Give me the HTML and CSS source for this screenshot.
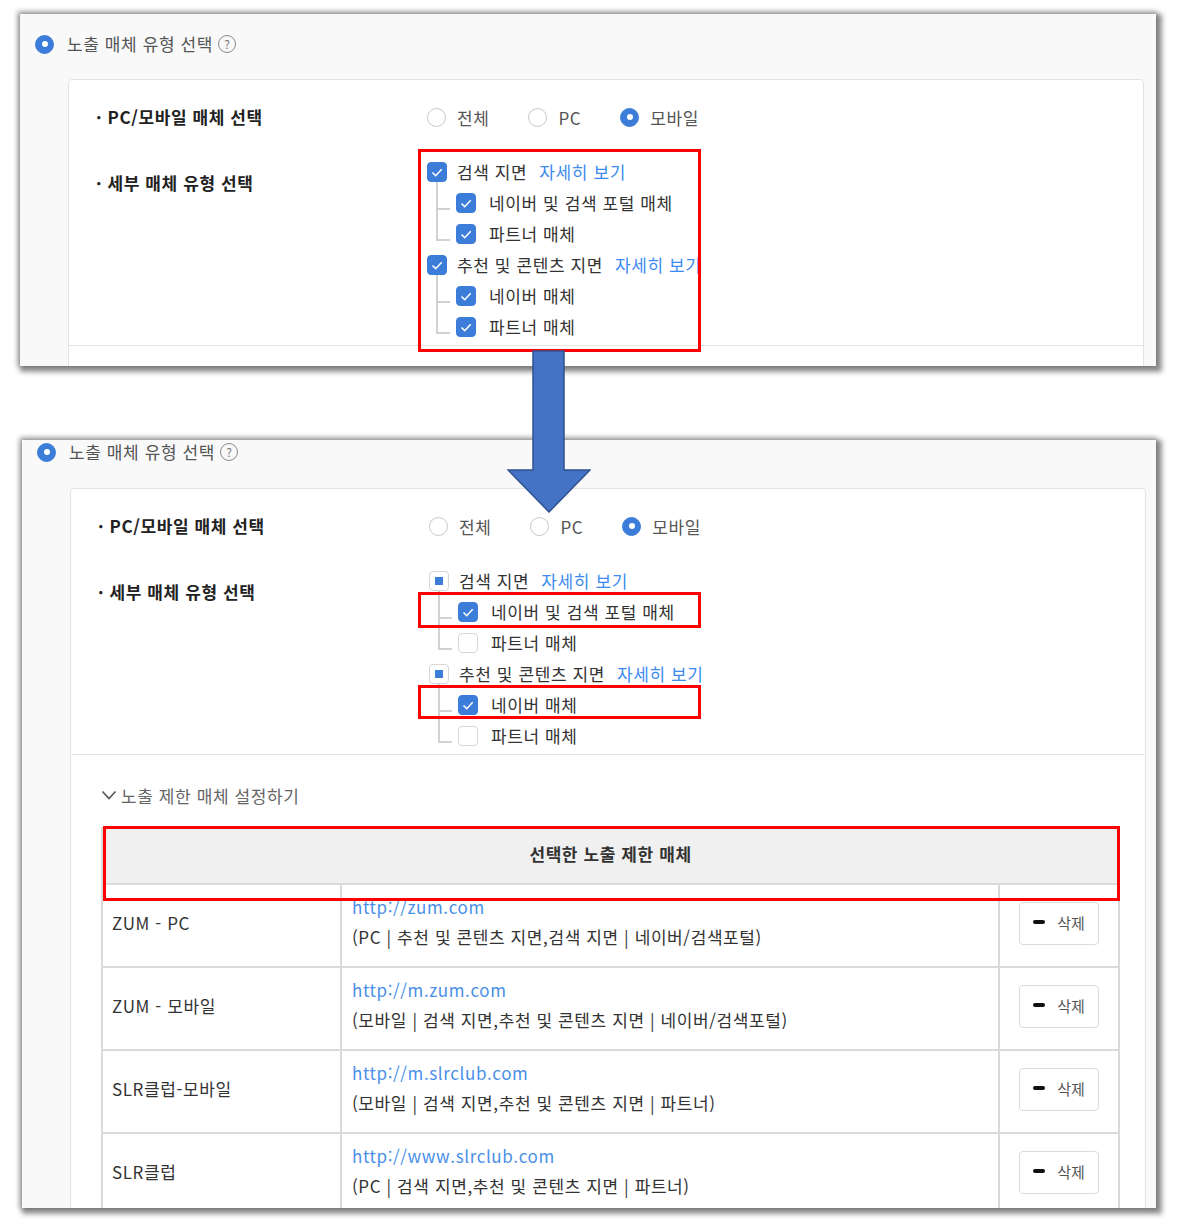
FILE: index.html
```html
<!DOCTYPE html>
<html lang="ko">
<head>
    <meta charset="UTF-8">
    <meta name="viewport" content="width=device-width, initial-scale=1.0">
    <title>노출 매체 유형 선택</title>
    <link rel="stylesheet" href="styles.css">
</head>
<body>
    <div class="canvas">
        <!-- Before: all media types checked -->
        <section class="shot shot-before">
            <div class="section-title">
                <span class="radio on"></span>
                <span>노출 매체 유형 선택</span>
                <span class="help">?</span>
            </div>
            <div class="media-box">
                <div class="media-form">
                    <div class="form-row">
                        <div class="form-label">· PC/모바일 매체 선택</div>
                        <div class="radio-group">
                            <label class="opt"><span class="radio"></span>전체</label>
                            <label class="opt"><span class="radio"></span>PC</label>
                            <label class="opt"><span class="radio on"></span>모바일</label>
                        </div>
                    </div>
                    <div class="form-row">
                        <div class="form-label detail">· 세부 매체 유형 선택</div>
                        <div class="tree clip">
                            <div class="tree-row"><span class="check on"><svg viewBox="0 0 20 20"><path d="M5.5 10.5l3.2 3.2 6-6.4"/></svg></span>검색 지면<a class="more" href="#">자세히 보기</a></div>
                            <div class="tree-row child"><span class="check on"><svg viewBox="0 0 20 20"><path d="M5.5 10.5l3.2 3.2 6-6.4"/></svg></span>네이버 및 검색 포털 매체</div>
                            <div class="tree-row child"><span class="check on"><svg viewBox="0 0 20 20"><path d="M5.5 10.5l3.2 3.2 6-6.4"/></svg></span>파트너 매체</div>
                            <div class="tree-row"><span class="check on"><svg viewBox="0 0 20 20"><path d="M5.5 10.5l3.2 3.2 6-6.4"/></svg></span>추천 및 콘텐츠 지면<a class="more" href="#">자세히 보기</a></div>
                            <div class="tree-row child"><span class="check on"><svg viewBox="0 0 20 20"><path d="M5.5 10.5l3.2 3.2 6-6.4"/></svg></span>네이버 매체</div>
                            <div class="tree-row child"><span class="check on"><svg viewBox="0 0 20 20"><path d="M5.5 10.5l3.2 3.2 6-6.4"/></svg></span>파트너 매체</div>
                        </div>
                    </div>
                </div>
                <div class="media-extra"></div>
            </div>
        </section>

        <!-- After: only naver media checked, excluded list shown -->
        <section class="shot shot-after">
            <div class="section-title">
                <span class="radio on"></span>
                <span>노출 매체 유형 선택</span>
                <span class="help">?</span>
            </div>
            <div class="media-box">
                <div class="media-form">
                    <div class="form-row">
                        <div class="form-label">· PC/모바일 매체 선택</div>
                        <div class="radio-group">
                            <label class="opt"><span class="radio"></span>전체</label>
                            <label class="opt"><span class="radio"></span>PC</label>
                            <label class="opt"><span class="radio on"></span>모바일</label>
                        </div>
                    </div>
                    <div class="form-row">
                        <div class="form-label detail">· 세부 매체 유형 선택</div>
                        <div class="tree">
                            <div class="tree-row"><span class="check part"></span>검색 지면<a class="more" href="#">자세히 보기</a></div>
                            <div class="tree-row child"><span class="check on"><svg viewBox="0 0 20 20"><path d="M5.5 10.5l3.2 3.2 6-6.4"/></svg></span>네이버 및 검색 포털 매체</div>
                            <div class="tree-row child"><span class="check"></span>파트너 매체</div>
                            <div class="tree-row"><span class="check part"></span>추천 및 콘텐츠 지면<a class="more" href="#">자세히 보기</a></div>
                            <div class="tree-row child"><span class="check on"><svg viewBox="0 0 20 20"><path d="M5.5 10.5l3.2 3.2 6-6.4"/></svg></span>네이버 매체</div>
                            <div class="tree-row child"><span class="check"></span>파트너 매체</div>
                        </div>
                    </div>
                </div>
                <div class="media-extra">
                    <div class="toggle">
                        <svg class="chevron" viewBox="0 0 16 10"><path d="M1.5 1.5l6.5 7 6.5-7"/></svg>
                        노출 제한 매체 설정하기
                    </div>
                    <table class="block-table">
                        <colgroup>
                            <col class="col-name">
                            <col class="col-site">
                            <col class="col-act">
                        </colgroup>
                        <thead>
                            <tr><th colspan="3">선택한 노출 제한 매체</th></tr>
                        </thead>
                        <tbody>
                            <tr>
                                <td>ZUM - PC</td>
                                <td class="site"><a href="#">http://zum.com</a><div>(PC | 추천 및 콘텐츠 지면,검색 지면 | 네이버/검색포털)</div></td>
                                <td class="act"><button class="del-btn"><span class="minus"></span>삭제</button></td>
                            </tr>
                            <tr>
                                <td>ZUM - 모바일</td>
                                <td class="site"><a href="#">http://m.zum.com</a><div>(모바일 | 검색 지면,추천 및 콘텐츠 지면 | 네이버/검색포털)</div></td>
                                <td class="act"><button class="del-btn"><span class="minus"></span>삭제</button></td>
                            </tr>
                            <tr>
                                <td>SLR클럽-모바일</td>
                                <td class="site"><a href="#">http://m.slrclub.com</a><div>(모바일 | 검색 지면,추천 및 콘텐츠 지면 | 파트너)</div></td>
                                <td class="act"><button class="del-btn"><span class="minus"></span>삭제</button></td>
                            </tr>
                            <tr>
                                <td>SLR클럽</td>
                                <td class="site"><a href="#">http://www.slrclub.com</a><div>(PC | 검색 지면,추천 및 콘텐츠 지면 | 파트너)</div></td>
                                <td class="act"><button class="del-btn"><span class="minus"></span>삭제</button></td>
                            </tr>
                        </tbody>
                    </table>
                </div>
            </div>
        </section>

        <!-- annotations drawn over the screenshots -->
        <div class="mark mark-tree"></div>
        <div class="mark mark-portal"></div>
        <div class="mark mark-naver"></div>
        <div class="mark mark-table"></div>
        <svg class="flow-arrow" viewBox="0 0 84 163">
            <polygon points="26,1 57,1 57,120 83,120 42,162 1,120 26,120"/>
        </svg>
    </div>
</body>
</html>
```

FILE: styles.css
```css
* {
    box-sizing: border-box;
}
body {
    margin: 0;
    background-color: #fff;
    font-family: "Noto Sans CJK KR", "Noto Sans", sans-serif;
    font-size: 17px;
    letter-spacing: 0.6px;
    color: #333;
}
.canvas {
    position: relative;
    width: 1178px;
    height: 1226px;
    padding: 14px 0 0 20px;
    display: flex;
    flex-direction: column;
    gap: 74px;
    overflow: hidden;
}

/* screenshot panels */
.shot {
    flex-shrink: 0;
    width: 1136px;
    background-color: #f9f9f9;
    overflow: hidden;
    box-shadow: 3px 3px 5px 3px rgba(0, 0, 0, 0.42), -1px -1px 5px 2px rgba(0, 0, 0, 0.25);
}
.shot-before {
    height: 352px;
    padding-top: 18px;
}
.shot-after {
    height: 768px;
    width: 1134px;
    margin-left: 2px;
}
.section-title {
    display: flex;
    align-items: center;
    height: 24px;
    padding-left: 15px;
    color: #555;
    line-height: 24px;
}
.section-title .radio {
    margin-right: 13px;
}
.help {
    width: 18px;
    height: 18px;
    margin-left: 5px;
    border: 1px solid #8a8a8a;
    border-radius: 50%;
    font-size: 12px;
    letter-spacing: 0;
    line-height: 16px;
    text-align: center;
    color: #777;
}
.media-box {
    margin: 23px 12px 0 48px;
    background-color: #fff;
    border: 1px solid #e3e3e3;
    border-radius: 4px;
}
.shot-after .media-box {
    margin-top: 24px;
    margin-right: 10px;
}
.media-form {
    display: flex;
    flex-direction: column;
    gap: 27px;
    padding: 25px 0 3px 27px;
}
.form-row {
    display: flex;
}
.form-label {
    flex-shrink: 0;
    width: 331px;
    font-weight: bold;
    color: #222;
    line-height: 24px;
}
.form-label.detail {
    padding-top: 15px;
}

/* radios */
.radio-group {
    display: flex;
    align-items: center;
    gap: 39px;
    height: 24px;
}
.opt {
    display: flex;
    align-items: center;
    gap: 11px;
    color: #555;
}
.radio {
    position: relative;
    flex-shrink: 0;
    width: 19px;
    height: 19px;
    border: 1px solid #c8c8c8;
    border-radius: 50%;
    background-color: #fff;
}
.radio.on {
    background-color: #3b7dd8;
    border-color: #3b7dd8;
}
.radio.on::after {
    content: "";
    position: absolute;
    left: 5.5px;
    top: 5.5px;
    width: 6px;
    height: 6px;
    border-radius: 50%;
    background-color: #fff;
}

/* checkbox tree (the first shot is cropped at its right edge) */
.tree {
    white-space: nowrap;
}
.tree.clip {
    width: 271px;
    overflow: hidden;
}
.tree-row {
    position: relative;
    display: flex;
    align-items: center;
    height: 31px;
    color: #333;
}
.tree-row.child {
    padding-left: 29px;
}
.tree-row.child::before {
    content: "";
    position: absolute;
    left: 9px;
    top: -11px;
    width: 12px;
    height: 32px;
    border-left: 2px solid #d2d2d2;
    border-bottom: 2px solid #d2d2d2;
}
.check {
    position: relative;
    z-index: 1;
    flex-shrink: 0;
    width: 20px;
    height: 20px;
    margin-right: 10px;
    border: 1px solid #d6d6d6;
    border-radius: 4px;
    background-color: #fff;
}
.tree-row.child .check {
    margin-right: 13px;
}
.check.on {
    background-color: #3b7dd8;
    border-color: #3b7dd8;
}
.check svg {
    position: absolute;
    left: -1px;
    top: -1px;
    width: 20px;
    height: 20px;
    fill: none;
    stroke: #fff;
    stroke-width: 1.6;
}
.check.part::after {
    content: "";
    position: absolute;
    left: 5px;
    top: 5px;
    width: 8px;
    height: 8px;
    background-color: #3b7dd8;
}
.more {
    margin-left: 12px;
    color: #3d8bef;
    text-decoration: none;
}

/* excluded media */
.media-extra {
    height: 60px;
    border-top: 1px solid #e3e3e3;
}
.shot-after .media-extra {
    height: auto;
    padding: 28px 27px 0 30px;
}
.toggle {
    display: flex;
    align-items: center;
    height: 24px;
    color: #666;
}
.chevron {
    width: 16px;
    height: 10px;
    margin-right: 4px;
    fill: none;
    stroke: #555;
    stroke-width: 1.6;
}
.block-table {
    width: 1017px;
    margin-top: 20px;
    border-collapse: collapse;
    table-layout: fixed;
}
.col-name { width: 239px; }
.col-site { width: 658px; }
.col-act { width: 120px; }
.block-table th {
    height: 56px;
    padding-bottom: 6px;
    background-color: #f0f0f0;
    border: 2px solid #dadada;
    font-weight: bold;
    color: #333;
}
.block-table td {
    height: 83px;
    padding: 0 9px 7px;
    border: 2px solid #dadada;
    color: #333;
    vertical-align: middle;
}
.block-table td.site {
    padding: 0 10px 7px;
    line-height: 30px;
}
.site a {
    color: #4a8fe8;
    text-decoration: none;
}
.block-table td.act {
    padding: 0 0 5px;
    text-align: center;
}
.del-btn {
    display: inline-flex;
    align-items: center;
    justify-content: center;
    gap: 12px;
    width: 80px;
    height: 43px;
    padding: 0 0 2px;
    border: 1px solid #dcdcdc;
    border-radius: 4px;
    background-color: #fff;
    font-family: inherit;
    font-size: 15px;
    color: #555;
}
.minus {
    width: 12px;
    height: 4px;
    border-radius: 2px;
    background-color: #111;
}

/* annotations */
.mark {
    position: absolute;
    border: 3px solid #ff0000;
}
.mark-tree { left: 418px; top: 149px; width: 283px; height: 203px; }
.mark-portal { left: 418px; top: 592px; width: 283px; height: 36px; }
.mark-naver { left: 418px; top: 685px; width: 283px; height: 34px; }
.mark-table { left: 103px; top: 826px; width: 1017px; height: 75px; }
.flow-arrow {
    position: absolute;
    left: 507px;
    top: 350px;
    width: 84px;
    height: 163px;
}
.flow-arrow polygon {
    fill: #4472c4;
    stroke: #2f528f;
    stroke-width: 1.5;
}
```
